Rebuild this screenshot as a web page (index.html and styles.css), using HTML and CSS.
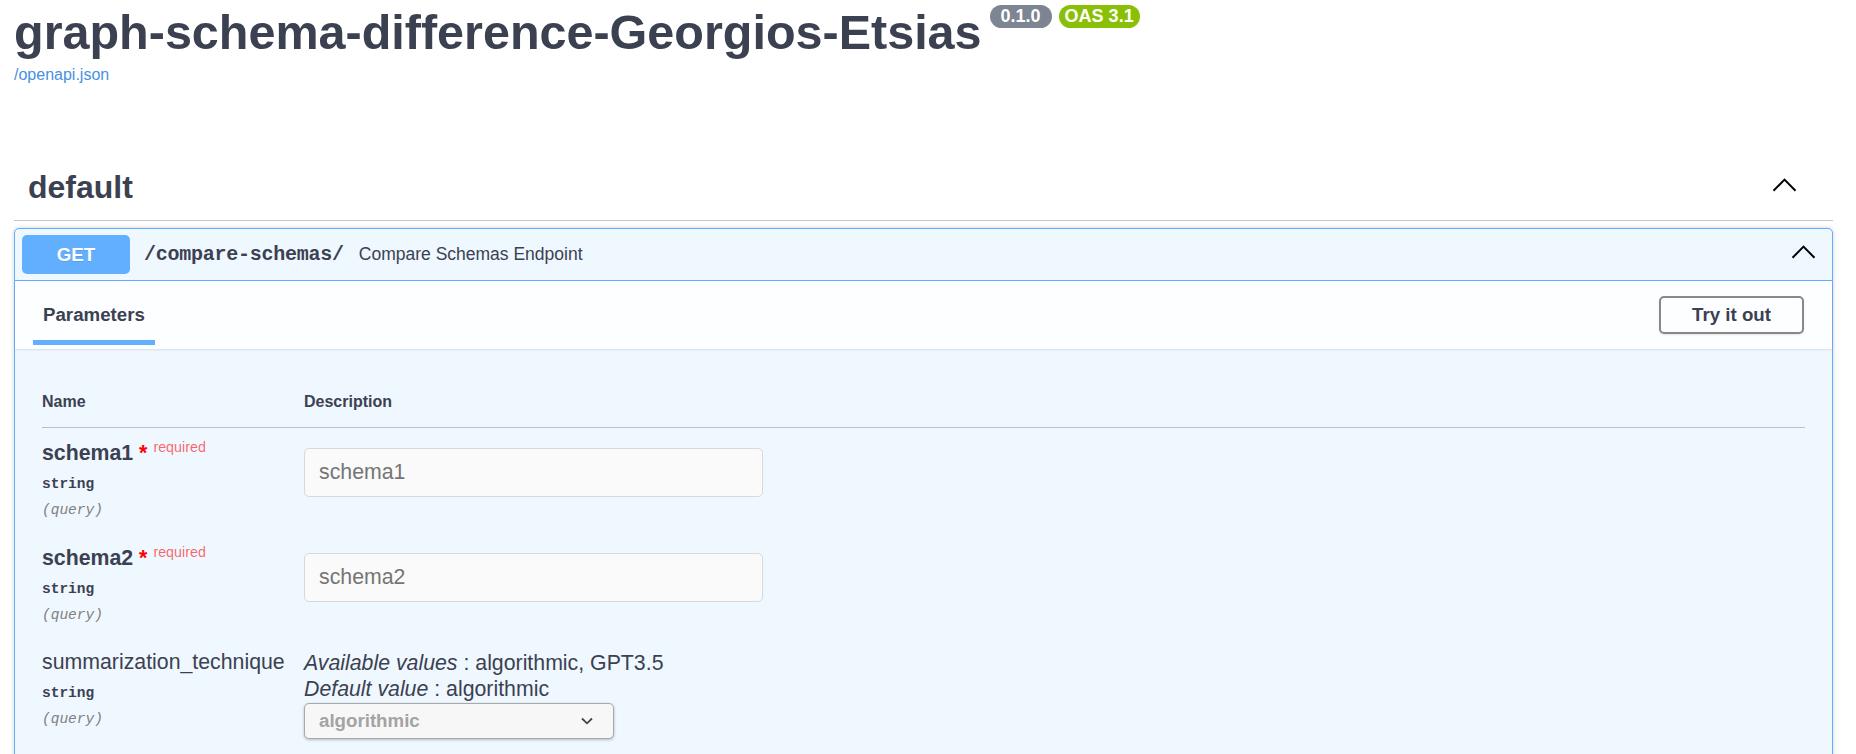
FILE: index.html
```html
<!DOCTYPE html>
<html lang="en">
<head>
<meta charset="utf-8">
<title>graph-schema-difference-Georgios-Etsias - Swagger UI</title>
<link rel="stylesheet" href="styles.css">
</head>
<body>
<div class="page">
  <div class="info">
    <div class="title-row">
      <h2 class="title">graph-schema-difference-Georgios-Etsias</h2>
      <div class="badges">
        <span class="badge badge-version"> 0.1.0 </span>
        <span class="badge badge-oas">OAS 3.1</span>
      </div>
    </div>
    <a class="spec-link" href="#">/openapi.json</a>
  </div>

  <section class="tag-section">
    <h3 class="tag-header">
      <span class="tag-name">default</span>
      <svg class="chevron chevron-tag" width="25" height="14" viewBox="0 0 25 14"><polyline points="1.5,12.8 12.5,1.6 23.5,12.8" fill="none" stroke="#000" stroke-width="2"/></svg>
    </h3>

    <div class="opblock">
      <div class="summary">
        <span class="method">GET</span>
        <span class="path">/compare-schemas/</span>
        <span class="summary-desc">Compare Schemas Endpoint</span>
        <svg class="chevron chevron-op" width="25" height="14" viewBox="0 0 25 14"><polyline points="1.5,12.8 12.5,1.6 23.5,12.8" fill="none" stroke="#000" stroke-width="2"/></svg>
      </div>

      <div class="section-header">
        <div class="tab"><span class="tab-label">Parameters</span></div>
        <button class="try-out" type="button">Try it out</button>
      </div>

      <div class="table-container">
        <div class="params-head">
          <div>Name</div>
          <div>Description</div>
        </div>

        <div class="param-row">
          <div class="col-name">
            <div class="param-name is-required">schema1<span class="star">&nbsp;*</span><span class="req">required</span></div>
            <div class="param-type">string</div>
            <div class="param-in">(query)</div>
          </div>
          <div class="col-desc">
            <input class="text-input" type="text" placeholder="schema1" disabled>
          </div>
        </div>

        <div class="param-row">
          <div class="col-name">
            <div class="param-name is-required">schema2<span class="star">&nbsp;*</span><span class="req">required</span></div>
            <div class="param-type">string</div>
            <div class="param-in">(query)</div>
          </div>
          <div class="col-desc">
            <input class="text-input" type="text" placeholder="schema2" disabled>
          </div>
        </div>

        <div class="param-row">
          <div class="col-name">
            <div class="param-name">summarization_technique</div>
            <div class="param-type">string</div>
            <div class="param-in">(query)</div>
          </div>
          <div class="col-desc">
            <p class="md-line"><i>Available values</i> : algorithmic, GPT3.5</p>
            <p class="md-line"><i>Default value</i> : algorithmic</p>
            <div class="select">
              <span class="select-value">algorithmic</span>
              <svg class="select-arrow" width="12" height="8" viewBox="0 0 12 8"><polyline points="1,1.5 6,6.3 11,1.5" fill="none" stroke="#41444e" stroke-width="1.8"/></svg>
            </div>
          </div>
        </div>
      </div>
    </div>
  </section>
</div>
</body>
</html>
```

FILE: styles.css
```css
html, body {
  margin: 0;
  padding: 0;
  background: #fff;
  overflow: hidden;
}

body {
  font-family: "Liberation Sans", Arial, sans-serif;
  color: #3b4151;
}

.page {
  padding-left: 14px;
  width: 1819px;
}

/* ---------- info ---------- */
.info {
  padding-top: 3px;
}

.title-row {
  display: flex;
  align-items: flex-start;
}

.title {
  margin: 0;
  font-size: 48.5px;
  line-height: 58px;
  font-weight: 700;
  color: #3b4151;
}

.badges {
  display: flex;
  gap: 7px;
  margin-left: 8px;
  margin-top: 2px;
}

.badge {
  display: inline-block;
  height: 23px;
  line-height: 23px;
  padding: 0 6px;
  border-radius: 12px;
  color: #fff;
  font-size: 18px;
  font-weight: 700;
  white-space: pre;
}

.badge-version {
  background: #7d8492;
}

.badge-oas {
  background: #89bf04;
}

.spec-link {
  display: block;
  margin-top: 4.5px;
  font-size: 16px;
  line-height: 18px;
  color: #4990e2;
  text-decoration: none;
  width: max-content;
}

/* ---------- tag ---------- */
.tag-section {
  margin-top: 70.5px;
}

.tag-header {
  display: flex;
  align-items: center;
  justify-content: space-between;
  margin: 0;
  padding: 13px 36px 13px 14px;
  border-bottom: 1px solid rgba(59, 65, 81, 0.3);
  font-size: 32px;
  line-height: 40px;
  font-weight: 700;
  color: #3b4151;
}

.chevron {
  display: block;
  flex: none;
}

.chevron-tag {
  margin-bottom: 5px;
}

/* ---------- operation block ---------- */
.opblock {
  margin-top: 7px;
  border: 1px solid #61affe;
  border-radius: 5px;
  background: #eff7ff;
  box-shadow: 0 0 4px rgba(0, 0, 0, 0.19);
  padding-bottom: 40px;
}

.summary {
  display: flex;
  align-items: center;
  padding: 6px 7px;
  border-bottom: 1px solid #61affe;
}

.method {
  display: block;
  width: 108px;
  height: 39px;
  line-height: 39px;
  text-align: center;
  background: #61affe;
  color: #fff;
  border-radius: 5px;
  font-size: 18.7px;
  font-weight: 700;
  text-shadow: 0 1px 0 rgba(0, 0, 0, 0.1);
}

.path {
  margin-left: 14px;
  font-family: "Liberation Mono", "DejaVu Sans Mono", monospace;
  font-weight: 700;
  font-size: 20px;
  letter-spacing: -0.25px;
  color: #3b4151;
}

.summary-desc {
  margin-left: 15px;
  font-size: 17.5px;
  color: #3b4151;
  flex: 1;
}

.chevron-op {
  margin-right: 9px;
  margin-bottom: 5px;
}

.section-header {
  display: flex;
  align-items: center;
  justify-content: space-between;
  height: 68px;
  padding: 0 28px 0 28px;
  background: rgba(255, 255, 255, 0.8);
  box-shadow: 0 1px 2px rgba(0, 0, 0, 0.1);
}

.tab-label {
  position: relative;
  display: inline-block;
  font-size: 18.7px;
  line-height: 22px;
  font-weight: 700;
  color: #3b4151;
}

.tab-label::after {
  content: "";
  position: absolute;
  left: -10%;
  width: 120%;
  top: 36px;
  height: 5px;
  background: #61affe;
}

.try-out {
  box-sizing: border-box;
  width: 145px;
  height: 38px;
  padding: 0;
  border: 2px solid #888;
  border-radius: 5px;
  background: transparent;
  box-shadow: 0 1px 2px rgba(0, 0, 0, 0.1);
  font-family: "Liberation Sans", Arial, sans-serif;
  font-size: 18.7px;
  font-weight: 700;
  color: #3b4151;
}

/* ---------- parameters table ---------- */
.table-container {
  padding: 27px 27px 0 27px;
}

.params-head {
  display: grid;
  grid-template-columns: 262px 1fr;
  padding: 17px 0 16px;
  border-bottom: 1px solid rgba(59, 65, 81, 0.3);
  font-size: 16px;
  line-height: 18px;
  font-weight: 700;
}

.param-row {
  display: grid;
  grid-template-columns: 262px 1fr;
  padding: 13px 0 13.5px;
}

.param-name {
  font-size: 21.3px;
  line-height: 24px;
  color: #3b4151;
  white-space: nowrap;
}

.param-name.is-required {
  font-weight: 700;
}

.star {
  color: #f00;
}

.req {
  position: relative;
  top: -8px;
  padding: 0 6px;
  font-size: 14.3px;
  line-height: 1;
  font-weight: 400;
  color: rgba(255, 0, 0, 0.6);
}

.param-type {
  margin-top: 10px;
  font-family: "Liberation Mono", "DejaVu Sans Mono", monospace;
  font-size: 14.5px;
  line-height: 18px;
  font-weight: 700;
  color: #3b4151;
}

.param-in {
  margin-top: 8px;
  font-family: "Liberation Mono", "DejaVu Sans Mono", monospace;
  font-size: 14.5px;
  line-height: 18px;
  font-style: italic;
  color: #808080;
}

.text-input {
  display: block;
  box-sizing: border-box;
  width: 459px;
  height: 49px;
  margin: 7px 0 0;
  padding: 0 14px;
  border: 1px solid #d9d9d9;
  border-radius: 5px;
  background: #fafafa;
  font-family: "Liberation Sans", Arial, sans-serif;
  font-size: 21.3px;
  color: #888;
}

.text-input::placeholder {
  color: #757575;
}

.md-line {
  margin: 0;
  font-size: 21.3px;
  line-height: 26px;
  color: #3b4151;
}

.select {
  box-sizing: border-box;
  display: flex;
  align-items: center;
  justify-content: space-between;
  width: 310px;
  height: 36px;
  margin-top: 1px;
  padding: 0 20px 0 14px;
  border: 1px solid #a9a9a9;
  border-radius: 5px;
  background: #f7f7f7;
  box-shadow: 0 1px 3px rgba(0, 0, 0, 0.25);
}

.select-value {
  font-size: 18.7px;
  font-weight: 700;
  color: #a3a3a3;
}

.select-arrow {
  display: block;
}
```
